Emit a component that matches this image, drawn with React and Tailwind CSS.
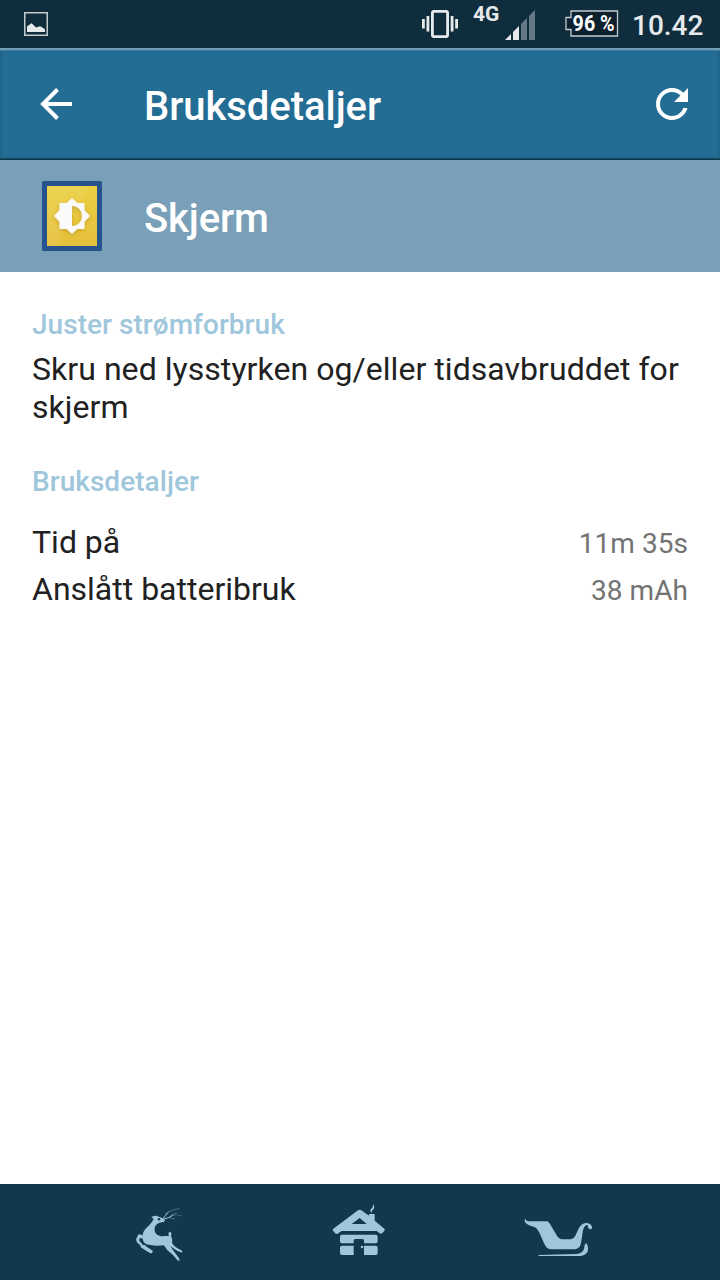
import React from 'react';

const details = [
  { label: 'Tid på', value: '11m 35s' },
  { label: 'Anslått batteribruk', value: '38 mAh' },
];

const PictureIcon = () => (
  <svg width="24" height="24" viewBox="0 0 24 24">
    <rect x="0.75" y="0.75" width="22.5" height="22.5" fill="none" stroke="#c3cbcf" strokeWidth="1.5" />
    <path d="M3 20V14.5L5 13L7.5 11.3L9.5 13L12 15.5L16 14.2L18.5 15.5L21 17.5V20Z" fill="#e7eaec" />
  </svg>
);

const VibrateIcon = () => (
  <svg width="36" height="28" viewBox="0 0 36 28" fill="#e7eaec">
    <rect x="10.4" y="1.4" width="15.2" height="25.2" rx="1.5" fill="none" stroke="#e7eaec" strokeWidth="2.8" />
    <rect x="0" y="9" width="2.8" height="9.5" />
    <rect x="4.5" y="6" width="2.8" height="15.5" />
    <rect x="28.7" y="6" width="2.8" height="15.5" />
    <rect x="33.2" y="9" width="2.8" height="9.5" />
  </svg>
);

const SignalIcon = () => (
  <svg width="30" height="30" viewBox="0 0 30 30">
    <path d="M0 30L6 24V30Z" fill="#e7eaec" />
    <path d="M8 22L14 16V30H8Z" fill="#e7eaec" />
    <path d="M16 14L22 8V30H16Z" fill="#647983" />
    <path d="M24 6L30 0V30H24Z" fill="#647983" />
  </svg>
);

const BatteryIcon = () => (
  <svg width="54" height="27" viewBox="0 0 54 27">
    <path d="M6 1H52.5V26H6V19.5H1V7.5H6Z" fill="#0c202d" stroke="#c3cbcf" strokeWidth="1.3" />
    <text x="28.6" y="20.8" textAnchor="middle" fill="#fff" className="font-['Roboto',sans-serif] text-[22px] font-bold" textLength="42" lengthAdjust="spacingAndGlyphs">
      96 %
    </text>
  </svg>
);

const BackIcon = () => (
  <svg width="32" height="32" viewBox="0 0 32 32" fill="none" stroke="#fff" strokeWidth="4">
    <path d="M32 16H3" />
    <path d="M17.5 1.5L3 16L17.5 30.5" />
  </svg>
);

const RefreshIcon = () => (
  <svg width="32" height="32" viewBox="4 4 16 16" fill="#fff">
    <path d="M17.65 6.35C16.2 4.9 14.21 4 12 4c-4.42 0-7.99 3.58-7.99 8s3.57 8 7.99 8c3.73 0 6.84-2.55 7.73-6h-2.08c-.82 2.33-3.04 4-5.65 4-3.31 0-6-2.69-6-6s2.69-6 6-6c1.66 0 3.14.69 4.22 1.78L13 11h7V4l-2.35 2.35z" />
  </svg>
);

const BrightnessIcon = () => (
  <svg width="60" height="70" viewBox="0 0 60 70">
    <defs>
      <linearGradient id="gold" x1="0" y1="0" x2="0" y2="1">
        <stop offset="0" stopColor="#ebd042" />
        <stop offset="1" stopColor="#e6c03c" />
      </linearGradient>
      <filter id="shade" x="-30%" y="-30%" width="160%" height="170%">
        <feDropShadow dx="0" dy="2" stdDeviation="2" floodColor="#a47b13" floodOpacity="0.4" />
      </filter>
    </defs>
    <rect width="60" height="70" rx="1.5" fill="#26528e" />
    <rect x="5" y="5" width="50" height="60" fill="url(#gold)" />
    <path d="M5 5H47L14 65H5Z" fill="#fff" fillOpacity="0.07" />
    <g filter="url(#shade)">
      <path
        fillRule="evenodd"
        fill="#fafafa"
        d="M30 17L35.3 22H42.5V29.2L48 35L42.5 40.8V48H35.3L30 53L24.7 48H17.5V40.8L12 35L17.5 29.2V22H24.7ZM30 25V45C36 45 40 40.5 40 35S36 25 30 25Z"
      />
    </g>
  </svg>
);

const ReindeerIcon = () => (
  <svg width="80" height="80" viewBox="0 0 240 240">
    <g fill="#9fc7dc">
      <path d="M94 65L106 62C114 63 119 66 124 68L134 73V79C128 83 122 81 117 84C108 88 104 94 104 101C103 112 109 119 118 122C127 125 137 122 147 124L145 117Q147 109 151 110Q156 113 153 124C156 130 158 135 156 143C160 151 166 156 173 160L187 168L186 173C176 170 166 164 158 158L151 153C158 165 168 177 178 191V198L172 196C164 184 154 175 145 168C138 162 136 155 131 151C117 153 103 153 87 149C76 148 70 143 68 135C66 121 68 112 76 102C84 94 94 87 101 73Z" />
      <path d="M71 132L61 129C57 132 56 136 60 140L68 148L63 153L52 143C48 138 47 133 51 127L54 120Q59 116 66 120L74 127Z" />
      <path d="M62 151L73 149L80 155L98 167Q99 174 91 175L76 166L62 157Z" />
    </g>
    <circle cx="117" cy="73" r="3.8" fill="#12384b" />
    <path d="M67 130Q67 143 77 148" fill="none" stroke="#12384b" strokeWidth="1.5" />
    <g fill="none" stroke="#9fc7dc" strokeLinecap="round">
      <path d="M129 70Q138 60 145 51" strokeWidth="3" />
      <path d="M145 51Q157 44 178 41" strokeWidth="1.6" strokeOpacity="0.65" />
      <path d="M132 72Q148 69 158 61" strokeWidth="3" />
      <path d="M158 61Q170 57 186 63" strokeWidth="1.6" strokeOpacity="0.5" />
      <path d="M140 59L137 53M147 68L164 72M155 61L169 54" strokeWidth="1.6" strokeOpacity="0.8" />
    </g>
  </svg>
);

const CabinIcon = () => (
  <svg width="80" height="80" viewBox="0 0 240 240" fill="#9fc7dc">
    <path
      fillRule="evenodd"
      d="M112 47Q119 42 126 47L147 62V57H164V77L193 101Q196 104 193 107L187 114Q183 118 178 114L170 108H65L55 115Q50 119 45 114L39 107Q37 104 40 101ZM119 69L95 87H140Z"
    />
    <path d="M66 119H167Q173 119 173 125V139Q173 145 167 145H132V137Q132 132 127 132H106Q101 132 101 137V145H66Q60 145 60 139V125Q60 119 66 119Z" />
    <path d="M66 152H101V180H66Q60 180 60 174V158Q60 152 66 152Z" />
    <path d="M132 152H167Q173 152 173 158V174Q173 180 167 180H132Z" />
    <circle cx="126" cy="156" r="4" />
    <path d="M155 54C148 47 152 42 157 38C160 35 158 31 159 27C164 35 164 40 159 44C155 47 155 50 155 54Z" />
  </svg>
);

const SleighIcon = () => (
  <svg width="90" height="80" viewBox="0 0 270 240" fill="#9fc7dc">
    <path d="M33 72C32 78 38 79 45 79H94C102 79 105 87 109 94L124 119C130 130 136 133 149 133H162C174 133 179 128 183 118L192 99C198 86 213 80 223 86C230 90 233 96 230 101C226 105 220 102 219 97C219 92 218 88 213 91C205 96 204 107 202 119L198 144C196 157 187 163 175 163H108C97 163 92 154 87 145L76 119C71 107 66 98 56 95C43 92 31 87 29 78Q28 72 33 72Z" />
    <path d="M70 180L185 177C198 176 207 169 208 156Q208 148 213 144C217 148 220 156 219 164C218 175 208 183 192 183H74Q69 183 70 180Z" />
  </svg>
);

const StatusBar = () => (
  <div className="flex h-12 items-start bg-[#0f2d3d] pl-6 text-[#e7eaec]">
    <div className="mt-3">
      <PictureIcon />
    </div>
    <div className="mt-2.5 ml-auto">
      <VibrateIcon />
    </div>
    <span className="mt-0.5 ml-[15px] w-[27px] text-[21px] leading-6 font-bold">4G</span>
    <div className="mt-2.5 ml-[5px]">
      <SignalIcon />
    </div>
    <div className="mt-[9.5px] ml-[29.5px]">
      <BatteryIcon />
    </div>
    <span className="mt-[10px] ml-[13.5px] w-[88px] text-[28px] leading-8 font-medium">10.42</span>
  </div>
);

const Header = () => (
  <header className="flex h-28 items-center border-t-2 border-b border-t-[#729db8] border-b-[#0f3044] bg-[#236c94] px-10 pb-px shadow-[inset_0_1px_0_#3c7b9f,inset_0_-1px_0_#174f6d,inset_0_0_3px_#17506f]">
    <BackIcon />
    <h1 className="ml-[72px] flex-1 pt-1 text-[40px] leading-[47px] font-medium tracking-[-0.05px] text-white">Bruksdetaljer</h1>
    <div className="-mr-2">
      <RefreshIcon />
    </div>
  </header>
);

const AppTitle = () => (
  <div className="flex h-28 items-center bg-[#7a9fb8] pl-[42px]">
    <BrightnessIcon />
    <h2 className="ml-[42px] pt-1 text-[40px] leading-[47px] font-medium tracking-[-0.15px] text-white">Skjerm</h2>
  </div>
);

const NavBar = () => (
  <nav className="flex h-24 items-center bg-[#12384b] pt-1.5 pl-[120px]">
    <ReindeerIcon />
    <div className="ml-[120px]">
      <CabinIcon />
    </div>
    <div className="ml-[115px]">
      <SleighIcon />
    </div>
  </nav>
);

export default function App() {
  return (
    <div className="flex h-[1280px] w-[720px] flex-col overflow-hidden bg-white font-['Roboto',sans-serif]">
      <StatusBar />
      <Header />
      <AppTitle />
      <main className="flex-1 px-8 pt-9 text-[#212121]">
        <h3 className="text-[28px] leading-[33px] font-medium tracking-[0.04px] text-[#9fc7dc]">Juster strømforbruk</h3>
        <p className="mt-[9px] text-[32px] leading-[38px] tracking-[0.05px]">Skru ned lysstyrken og/eller tidsavbruddet for skjerm</p>
        <h3 className="mt-[39px] text-[28px] leading-[33px] font-medium tracking-[0.04px] text-[#9fc7dc]">Bruksdetaljer</h3>
        <div className="mt-[25px] flex flex-col gap-[9px]">
          {details.map((row) => (
            <div key={row.label} className="flex items-baseline justify-between">
              <span className="text-[32px] leading-[38px]">{row.label}</span>
              <span className="text-[28px] leading-[33px] tracking-[0.05px] text-[#737373]">{row.value}</span>
            </div>
          ))}
        </div>
      </main>
      <NavBar />
    </div>
  );
}
